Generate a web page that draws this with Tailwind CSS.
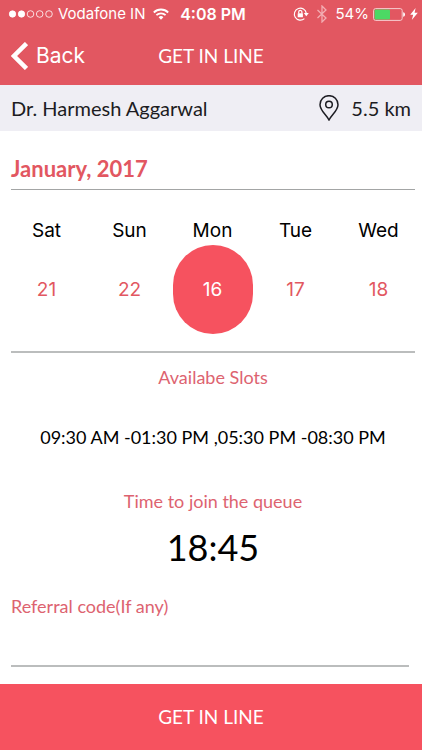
<!DOCTYPE html>
<html lang="en">
<head>
    <meta charset="UTF-8">
    <meta name="viewport" content="width=device-width, initial-scale=1.0">
    <title>Get in line</title>
    <script src="https://cdn.jsdelivr.net/npm/@tailwindcss/browser@4"></script>
</head>
<body class="min-h-screen flex flex-col bg-white text-black font-[Lato,sans-serif]">

<!-- Header -->
<header class="h-[85px] bg-[#e25761] text-white">
    <!-- Status bar -->
    <div class="flex items-center h-7 pl-2 pr-1 font-[Inter,sans-serif] text-[15px] leading-5 whitespace-nowrap">
        <div class="flex-1 flex items-center">
            <svg class="w-[46px] h-2 mr-1" viewBox="0 0 46 8" fill="none" stroke="#fff" stroke-width=".8">
                <circle cx="4.5" cy="4" r="3.2" fill="#fff"/>
                <circle cx="13.5" cy="4" r="3.2" fill="#fff"/>
                <circle cx="22.5" cy="4" r="3.3"/>
                <circle cx="31.7" cy="4" r="3.3"/>
                <circle cx="41" cy="4" r="3.3"/>
            </svg>
            <span>Vodafone IN</span>
            <svg class="w-4 h-3 ml-2" viewBox="0 0 16 12" fill="none" stroke="#fff" stroke-width="1.8">
                <path d="M.8 4.5a10.2 10.2 0 0 1 14.4 0"/>
                <path d="M3.4 7.2a6.5 6.5 0 0 1 9.2 0"/>
                <path d="M5.6 9.3a3.4 3.4 0 0 1 4.8 0L8 11.8z" fill="#fff" stroke="none"/>
            </svg>
        </div>
        <span class="text-[16px] font-semibold">4:08 PM</span>
        <div class="flex-1 flex items-center justify-end">
            <svg class="w-4 h-4 mr-2" viewBox="0 0 16 16" fill="none" stroke="#fff" stroke-width="1.2">
                <path d="M11.4 12.6a6 6 0 1 1 1.9-5.3"/>
                <path d="M10.8 7h5l-2.5 3.2z" fill="#fff" stroke="none"/>
                <rect x="4.7" y="7.2" width="5.2" height="4" rx=".5" fill="#fff" stroke="none"/>
                <path d="M5.7 7.4V6a1.6 1.6 0 0 1 3.2 0v1.4"/>
            </svg>
            <svg class="w-[10px] h-[18px] mr-2" viewBox="0 0 10 18" fill="none" stroke="#f3adb2" stroke-width="1.3">
                <path d="M.5 5l8.5 8-4 4V1l4 4-8.5 8"/>
            </svg>
            <span>54%</span>
            <svg class="w-[33px] h-[13px] ml-1" viewBox="0 0 33 13" fill="none">
                <rect x=".6" y=".6" width="28.6" height="11.8" rx="2" stroke="#f7cdd0"/>
                <rect x="1.6" y="1.6" width="15.4" height="9.8" rx="1" fill="#4cd964"/>
                <path d="M30.2 4.2c2.4.4 2.4 4.2 0 4.6z" fill="#fff"/>
            </svg>
            <svg class="w-2 h-3 ml-1" viewBox="0 0 8 12" fill="#fff">
                <path d="M5.6 0L.2 6.8h3L1.8 12l6-7.2H4.6z"/>
            </svg>
        </div>
    </div>
    <!-- Navigation -->
    <nav class="flex items-center h-14 px-[11px]">
        <div class="flex-1">
            <button type="button" class="flex items-center gap-2 font-[Inter,sans-serif] text-[21px] leading-7">
                <svg class="w-[17px] h-7" viewBox="0 0 17 28" fill="none" stroke="#fff" stroke-width="4.5">
                    <path d="M15.5 1.5L3 14l12.5 12.5"/>
                </svg>
                Back
            </button>
        </div>
        <h1 class="text-[19px] leading-6">GET IN LINE</h1>
        <div class="flex-1"></div>
    </nav>
</header>

<!-- Doctor -->
<section class="flex items-center justify-between h-[46px] px-[11px] bg-[#efeef4] text-[20px] leading-6 text-[#1c1c22]">
    <h2>Dr. Harmesh Aggarwal</h2>
    <div class="flex items-center gap-3">
        <svg class="w-5 h-[26px]" viewBox="0 0 20 26" fill="none" stroke="#1c1c22" stroke-width="1.5">
            <path d="M10 25C7.5 20 1 15.5 1 9.7a9 9 0 0 1 18 0C19 15.5 12.5 20 10 25z"/>
            <circle cx="10" cy="9.5" r="3.3"/>
        </svg>
        <span>5.5 km</span>
    </div>
</section>

<main class="flex-1 flex flex-col">
    <!-- Calendar -->
    <h3 class="ml-[11px] mr-[7px] pt-[26px] pb-2 border-b border-[#a3a5a5] text-[22px] leading-6 font-bold text-[#e25761]">January, 2017</h3>
    <div class="grid grid-cols-5 pt-[27px] pl-[5px] pr-0.5 text-center font-[Inter,sans-serif] text-[19px] leading-7">
        <span>Sat</span>
        <span>Sun</span>
        <span>Mon</span>
        <span>Tue</span>
        <span>Wed</span>
    </div>
    <div class="grid grid-cols-5 pl-[5px] pr-0.5 pb-[17px] justify-items-center font-[Inter,sans-serif] text-[19px] leading-7 text-[#e25761]">
        <button type="button" class="w-20 h-[89px] rounded-[40px]">21</button>
        <button type="button" class="w-20 h-[89px] rounded-[40px]">22</button>
        <button type="button" class="w-20 h-[89px] rounded-[40px] bg-[#f6525f] text-white" aria-pressed="true">16</button>
        <button type="button" class="w-20 h-[89px] rounded-[40px]">17</button>
        <button type="button" class="w-20 h-[89px] rounded-[40px]">18</button>
    </div>

    <!-- Slots -->
    <section class="ml-[11px] mr-[7px] pt-3 border-t-2 border-[#bbbdbd] text-center">
        <h3 class="text-[18px] leading-6 text-[#dd6370]">Availabe Slots</h3>
        <p class="mt-9 text-[18px] leading-6">09:30 AM -01:30 PM ,05:30 PM -08:30 PM</p>
        <h3 class="mt-10 text-[18px] leading-6 text-[#dd6370]">Time to join the queue</h3>
        <p class="mt-3 text-[36px] leading-11">18:45</p>
    </section>

    <!-- Referral -->
    <div class="flex flex-col ml-[11px] mr-[13px] mt-[25px]">
        <label for="referral" class="text-[18px] leading-6 text-[#dd6370]">Referral code(If any)</label>
        <input id="referral" type="text" class="h-[49px] border-b-2 border-[#bbbdbd] text-[18px] focus:outline-none">
    </div>
</main>

<button type="button" class="w-full h-[66px] bg-[#f6525f] text-white text-[19px] leading-6">GET IN LINE</button>

</body>
</html>
